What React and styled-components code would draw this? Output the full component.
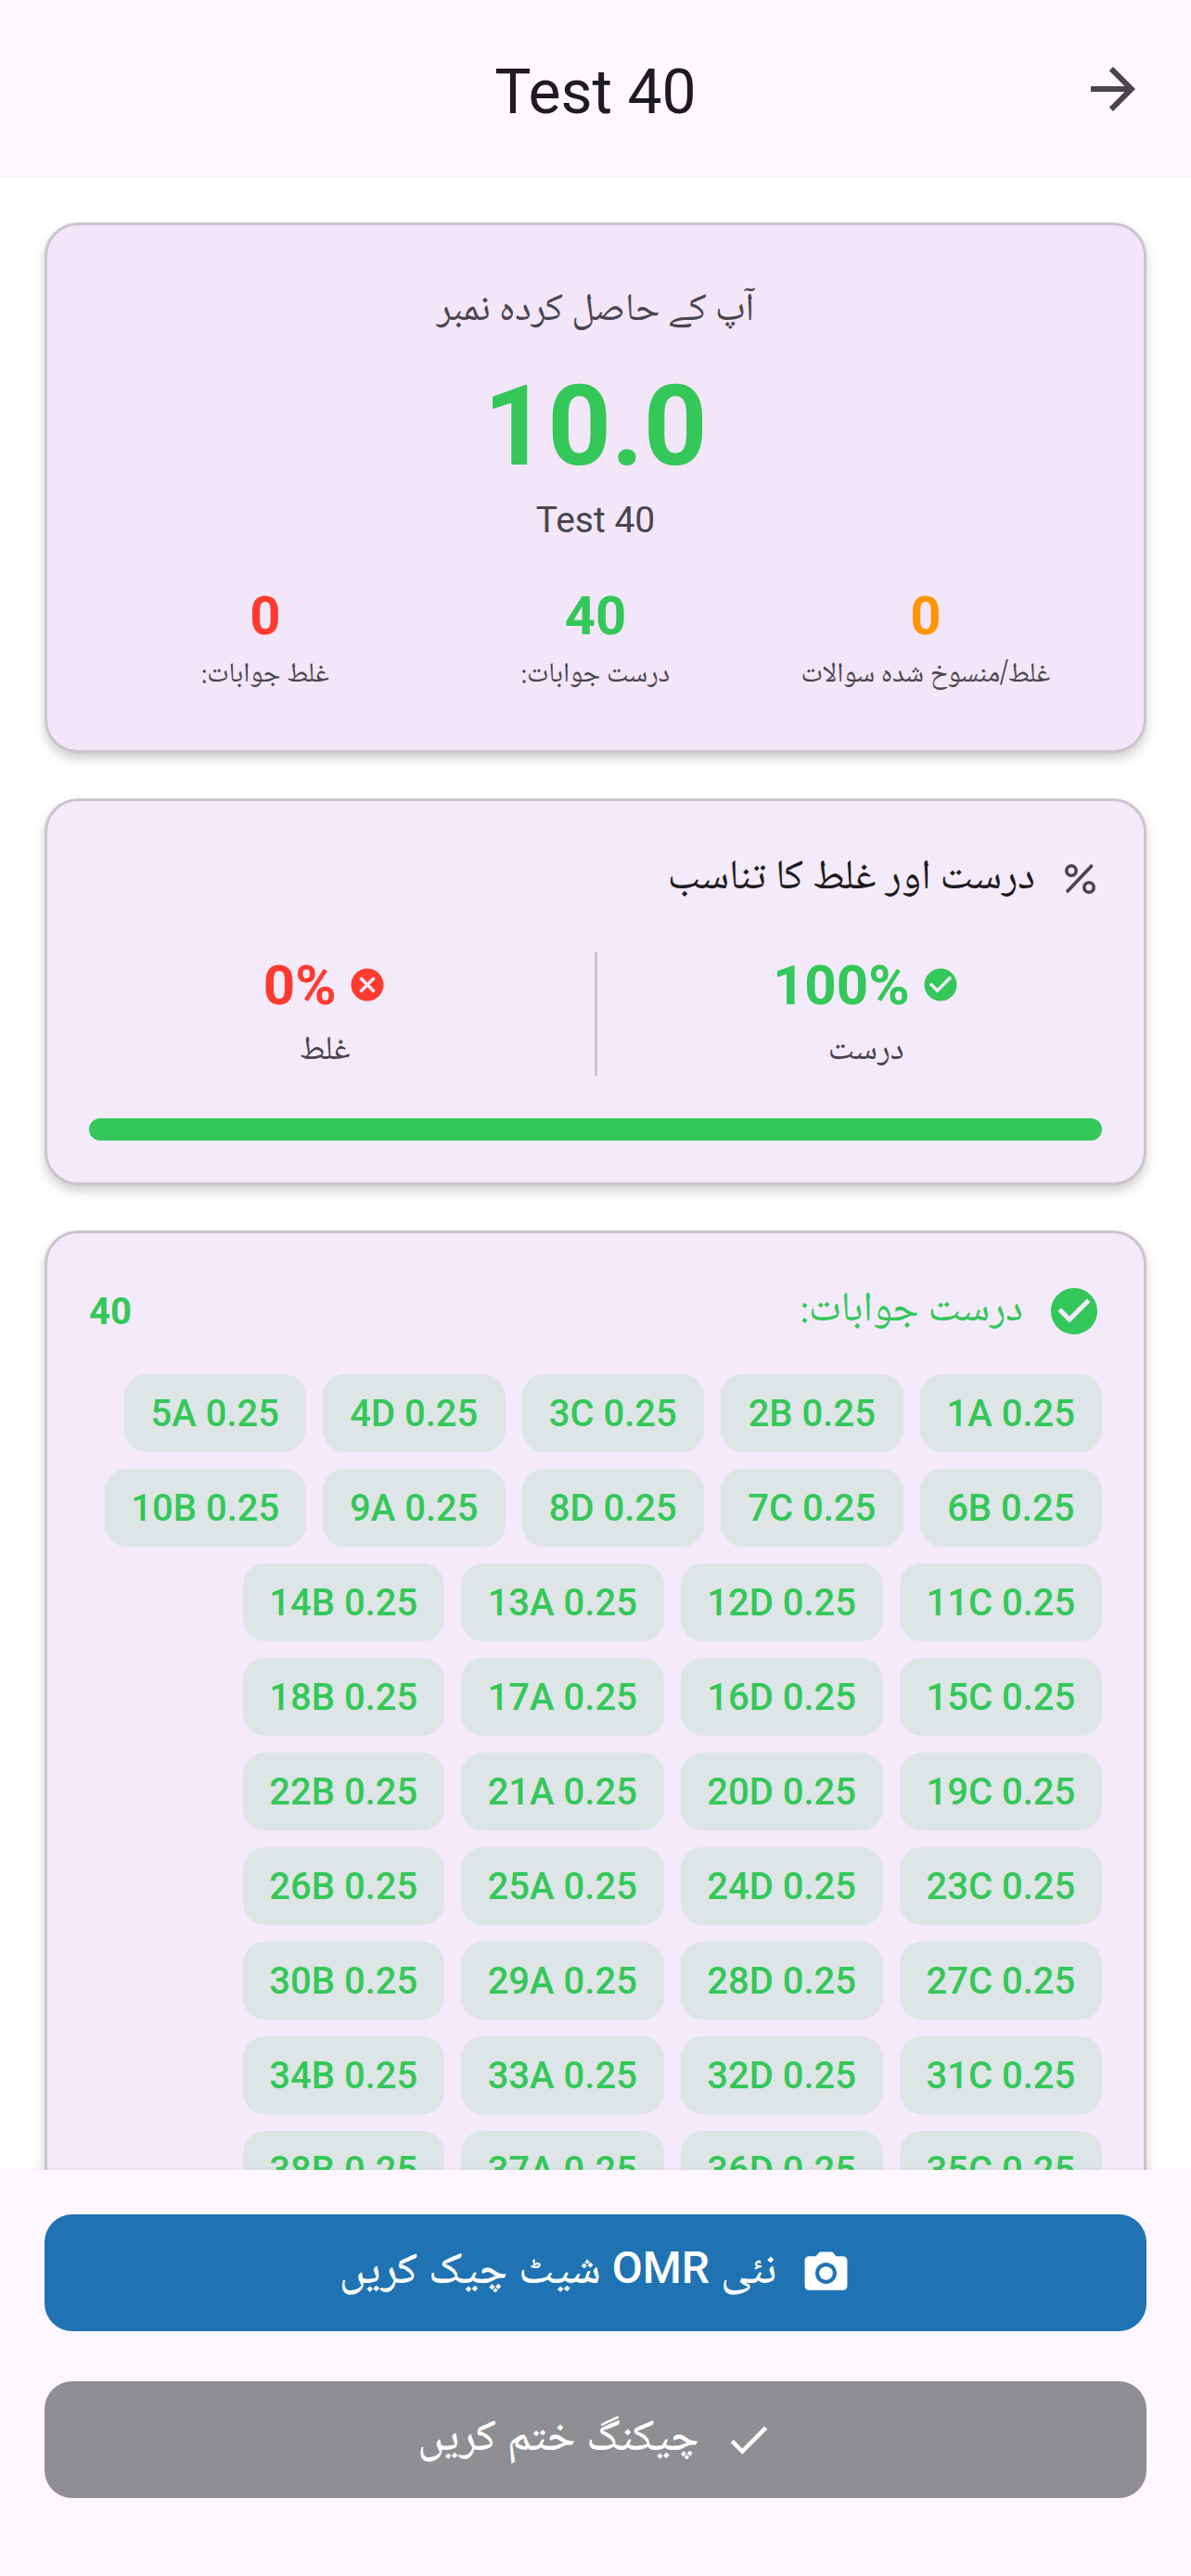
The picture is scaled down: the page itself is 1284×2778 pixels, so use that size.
import React from "react"
import styled, { createGlobalStyle } from "styled-components"

const GREEN = "#34c759"
const RED = "#ff3b30"
const ORANGE = "#ff9500"
const URDU = `"Noto Naskh Arabic", "Noto Sans Arabic", "DejaVu Sans", sans-serif`
const LETTERS = ["A", "B", "C", "D"]

const answers = Array.from({ length: 40 }, (_, i) => `${i + 1}${LETTERS[i % 4]} 0.25`)

const stats = [
  { value: "0", label: "غلط/منسوخ شدہ سوالات", color: ORANGE },
  { value: "40", label: "درست جوابات:", color: GREEN },
  { value: "0", label: "غلط جوابات:", color: RED },
]

const GlobalStyle = createGlobalStyle`
  html, body {
    margin: 0;
    padding: 0;
    background: #fff;
  }
  * {
    box-sizing: border-box;
  }
`

const Screen = styled.div`
  width: 1284px;
  height: 2778px;
  display: flex;
  flex-direction: column;
  overflow: hidden;
  direction: rtl;
  font-family: Roboto, sans-serif;
  background: #fff;
`

const AppBar = styled.header`
  height: 192px;
  flex: none;
  display: flex;
  align-items: center;
  justify-content: center;
  position: relative;
  background: #fef7ff;
`

const AppTitle = styled.h1`
  margin: 6px 0 0;
  font-size: 66px;
  font-weight: 400;
  color: #1d1b20;
`

const BackButton = styled.div`
  position: absolute;
  right: 48px;
  top: 60px;
  width: 72px;
  height: 72px;
  color: #49454f;
`

const Main = styled.main`
  flex: 1;
  min-height: 0;
  overflow: hidden;
  padding: 48px 48px 0;
  display: flex;
  flex-direction: column;
  gap: 49px;
`

const Card = styled.section`
  flex: none;
  border: 3px solid #cac4d0;
  border-radius: 36px;
  padding: 0 45px;
  background: ${p => p.$bg};
  box-shadow: 0 6px 12px rgba(0, 0, 0, 0.2);
`

const ScoreCard = styled(Card)`
  height: 572px;
  padding-top: 58px;
  display: flex;
  flex-direction: column;
  align-items: center;
`

const ScoreTitle = styled.div`
  font-family: ${URDU};
  font-size: 42px;
  line-height: 70px;
  color: #49454f;
`

const ScoreValue = styled.div`
  margin-top: 17px;
  font-size: 120px;
  line-height: 144px;
  font-weight: 700;
  color: ${GREEN};
`

const ScoreName = styled.div`
  margin-top: 5px;
  font-size: 39px;
  line-height: 48px;
  color: #49454f;
`

const StatGrid = styled.div`
  width: 100%;
  margin-top: 45px;
  padding: 0 12px;
  display: grid;
  grid-template-columns: repeat(3, 1fr);
`

const Stat = styled.div`
  display: flex;
  flex-direction: column;
  align-items: center;
`

const StatValue = styled.div`
  font-size: 58px;
  line-height: 68px;
  font-weight: 700;
  color: ${p => p.$color};
`

const StatLabel = styled.div`
  margin-top: 6px;
  font-family: ${URDU};
  font-size: 30px;
  line-height: 50px;
  white-space: nowrap;
  color: #49454f;
`

const RatioCard = styled(Card)`
  height: 417px;
  padding-top: 60px;
`

const RatioHeader = styled.div`
  display: flex;
  align-items: center;
  gap: 24px;
  height: 48px;
  font-family: ${URDU};
  font-size: 45px;
  color: #1d1b20;
`

const Columns = styled.div`
  margin: 55px -36px 0;
  display: grid;
  grid-template-columns: 1fr 3px 1fr;
  height: 132px;
`

const Divider = styled.div`
  background: #cac4d0;
`

const Column = styled.div`
  display: flex;
  flex-direction: column;
  align-items: center;
`

const PercentRow = styled.div`
  display: flex;
  align-items: center;
  gap: 12px;
  height: 70px;
  color: ${p => p.$color};
`

const PercentText = styled.span`
  font-size: 60px;
  font-weight: 700;
  direction: ltr;
`

const ColumnLabel = styled.div`
  margin-top: 13px;
  font-family: ${URDU};
  font-size: 36px;
  line-height: 50px;
  color: #49454f;
`

const Bar = styled.div`
  margin-top: 47px;
  height: 24px;
  border-radius: 12px;
  background: ${GREEN};
`

const AnswersCard = styled(Card)`
  padding-top: 54px;
  padding-bottom: 48px;
`

const AnswersHeader = styled.div`
  display: flex;
  align-items: center;
  justify-content: space-between;
  height: 60px;
  color: ${GREEN};
`

const AnswersTitle = styled.div`
  display: flex;
  align-items: center;
  gap: 25px;
  font-family: ${URDU};
  font-size: 45px;
`

const AnswersCount = styled.div`
  font-size: 40px;
  font-weight: 700;
`

const Chips = styled.div`
  margin-top: 38px;
  display: flex;
  flex-wrap: wrap;
  gap: 18px;
`

const Chip = styled.div`
  direction: ltr;
  height: 84px;
  min-width: 196.5px;
  padding: 0 28.7px;
  display: flex;
  align-items: center;
  justify-content: center;
  border-radius: 24px;
  background: #dde5e6;
  color: ${GREEN};
  font-size: 40px;
  font-weight: 500;
`

const Footer = styled.footer`
  flex: none;
  height: 438px;
  padding: 48px 48px 0;
  display: flex;
  flex-direction: column;
  gap: 54px;
  background: #fef7ff;
  position: relative;
  box-shadow: 0 -1px 4px rgba(0, 0, 0, 0.05);
`

const Button = styled.button`
  height: 126px;
  border: 0;
  border-radius: 30px;
  display: flex;
  align-items: center;
  justify-content: center;
  gap: 26px;
  background: ${p => p.$bg};
  color: #fff;
  font-family: Roboto, ${URDU};
  font-size: 48px;
  font-weight: 500;
  direction: rtl;
`

const ArrowIcon = () => (
  <svg viewBox="0 0 24 24" width="72" height="72" fill="currentColor">
    <path d="M12 4l-1.41 1.41L16.17 11H4v2h12.17l-5.58 5.59L12 20l8-8z" />
  </svg>
)

const PercentIcon = () => (
  <svg viewBox="0 0 24 24" width="48" height="48" fill="none" stroke="#49454f" strokeWidth="1.8" strokeLinecap="round">
    <circle cx="7.5" cy="7.5" r="2.6" />
    <circle cx="17" cy="16.5" r="2.6" />
    <path d="M18.3 5L5.5 18.5" />
  </svg>
)

const CheckCircle = ({ size, color }) => (
  <svg viewBox="0 0 24 24" width={size} height={size} fill={color}>
    <path d="M12 2C6.48 2 2 6.48 2 12s4.48 10 10 10 10-4.48 10-10S17.52 2 12 2zm-2 15l-5-5 1.41-1.41L10 14.17l7.59-7.59L19 8l-9 9z" />
  </svg>
)

const CancelCircle = ({ size, color }) => (
  <svg viewBox="0 0 24 24" width={size} height={size} fill={color}>
    <path d="M12 2C6.47 2 2 6.47 2 12s4.47 10 10 10 10-4.47 10-10S17.53 2 12 2zm5 13.59L15.59 17 12 13.41 8.41 17 7 15.59 10.59 12 7 8.41 8.41 7 12 10.59 15.59 7 17 8.41 13.41 12 17 15.59z" />
  </svg>
)

const CameraIcon = () => (
  <svg viewBox="0 0 24 24" width="55" height="55" fill="#fff">
    <circle cx="12" cy="12" r="3.2" />
    <path d="M9 2L7.17 4H4c-1.1 0-2 .9-2 2v12c0 1.1.9 2 2 2h16c1.1 0 2-.9 2-2V6c0-1.1-.9-2-2-2h-3.17L15 2H9zm3 15c-2.76 0-5-2.24-5-5s2.24-5 5-5 5 2.24 5 5-2.24 5-5 5z" />
  </svg>
)

const CheckIcon = () => (
  <svg viewBox="0 0 24 24" width="54" height="54" fill="#fff">
    <path d="M9 16.17L4.83 12l-1.42 1.41L9 19 21 7l-1.41-1.41z" />
  </svg>
)

const App = () => {
  return (
    <Screen>
      <GlobalStyle />
      <AppBar>
        <AppTitle>Test 40</AppTitle>
        <BackButton>
          <ArrowIcon />
        </BackButton>
      </AppBar>
      <Main>
        <ScoreCard $bg="#f2e6f8">
          <ScoreTitle>آپ کے حاصل کردہ نمبر</ScoreTitle>
          <ScoreValue>10.0</ScoreValue>
          <ScoreName>Test 40</ScoreName>
          <StatGrid>
            {stats.map(item => (
              <Stat key={item.label}>
                <StatValue $color={item.color}>{item.value}</StatValue>
                <StatLabel>{item.label}</StatLabel>
              </Stat>
            ))}
          </StatGrid>
        </ScoreCard>
        <RatioCard $bg="#f3eafa">
          <RatioHeader>
            <PercentIcon />
            درست اور غلط کا تناسب
          </RatioHeader>
          <Columns>
            <Column>
              <PercentRow $color={GREEN}>
                <CheckCircle size={42} color={GREEN} />
                <PercentText>100%</PercentText>
              </PercentRow>
              <ColumnLabel>درست</ColumnLabel>
            </Column>
            <Divider />
            <Column>
              <PercentRow $color={RED}>
                <CancelCircle size={42} color={RED} />
                <PercentText>0%</PercentText>
              </PercentRow>
              <ColumnLabel>غلط</ColumnLabel>
            </Column>
          </Columns>
          <Bar />
        </RatioCard>
        <AnswersCard $bg="#f3eafa">
          <AnswersHeader>
            <AnswersTitle>
              <CheckCircle size={60} color={GREEN} />
              درست جوابات:
            </AnswersTitle>
            <AnswersCount>40</AnswersCount>
          </AnswersHeader>
          <Chips>
            {answers.map(answer => (
              <Chip key={answer}>{answer}</Chip>
            ))}
          </Chips>
        </AnswersCard>
      </Main>
      <Footer>
        <Button $bg="#2073b3">
          <CameraIcon />
          نئی OMR شیٹ چیک کریں
        </Button>
        <Button $bg="#8e8e93">
          <CheckIcon />
          چیکنگ ختم کریں
        </Button>
      </Footer>
    </Screen>
  )
}

export default App
